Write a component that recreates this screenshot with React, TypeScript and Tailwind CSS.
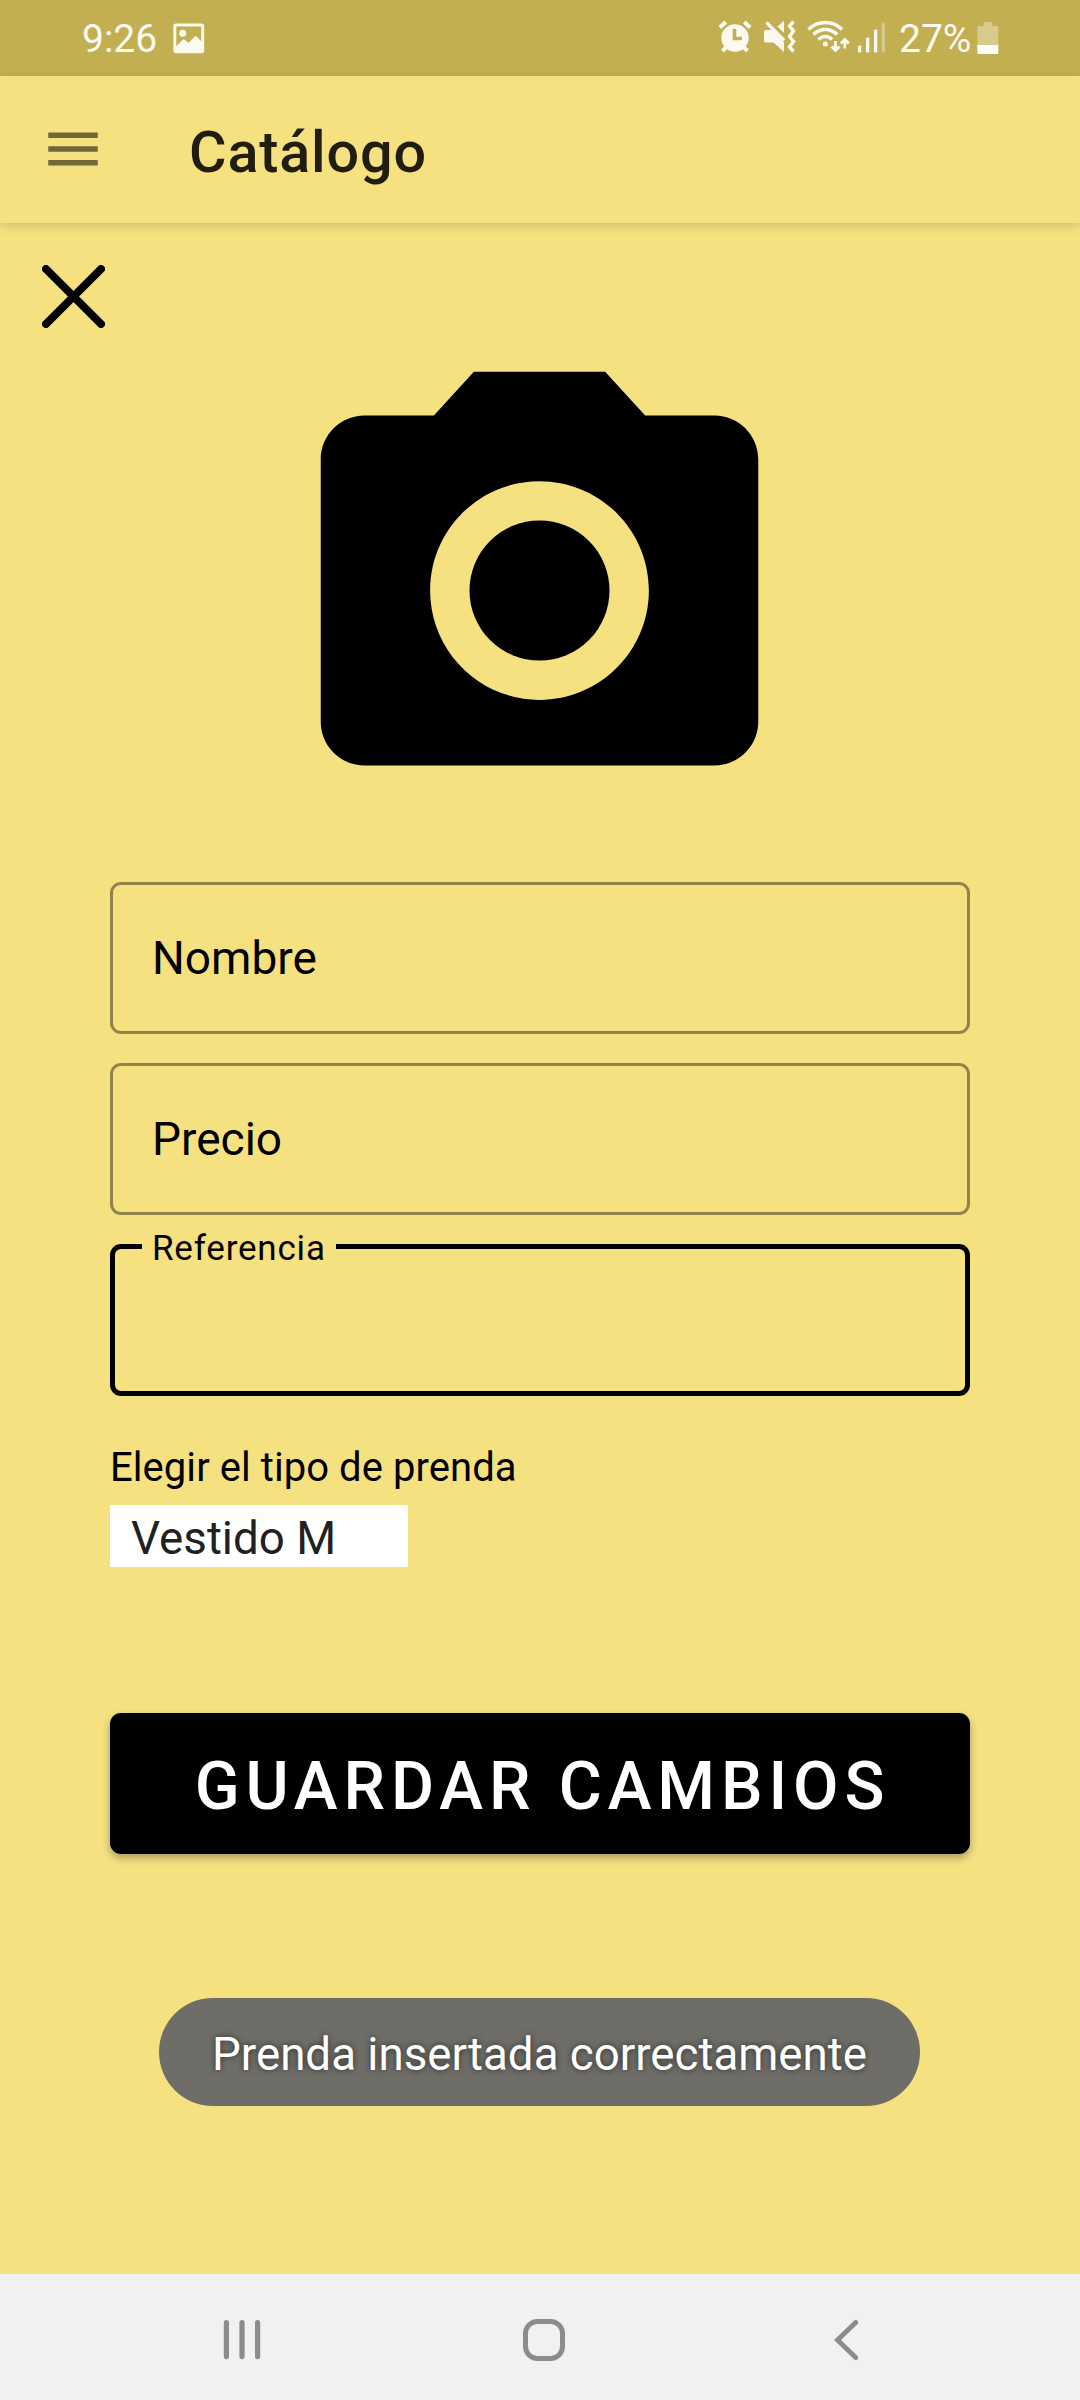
import type { ReactNode } from "react";

function ImageIcon() {
  return (
    <svg className="ml-[17px] h-[31px] w-[32px]" viewBox="0 0 32 31" fill="none">
      <path
        fill="#fcfaf0"
        fillRule="evenodd"
        d="M3 .5h25.500a2.700 2.700 0 0 1 2.700 2.700v24.300a2.700 2.700 0 0 1-2.700 2.700H3a2.700 2.700 0 0 1-2.700-2.700V3.200A2.700 2.700 0 0 1 3 .5zM3.300 3.600v19.700l6.700-6.700a1 1 0 0 1 1.400 0l4 3.400 6.500-6.700a1 1 0 0 1 1.400 0l4.900 5V3.600z"
      />
      <circle cx="9.700" cy="10.300" r="3.500" fill="#fcfaf0" />
    </svg>
  );
}

function StatusIcons() {
  return (
    <svg className="h-[40px] w-[170px]" viewBox="716 18 170 40" fill="none">
      {/* alarm clock */}
      <g>
        <circle cx="735" cy="38" r="13.700" fill="#fcfaf0" />
        <path d="M719.800 27.500l6-5.500M750.200 27.500l-6-5.500M726 47.500l-3.500 3.500M744 47.500l3.500 3.500" stroke="#fcfaf0" strokeWidth="4" />
        <path d="M734.500 29v9.500h7.500" stroke="#c2af52" strokeWidth="3.600" />
      </g>
      {/* muted speaker with vibration */}
      <g fill="#fcfaf0">
        <path d="M765.500 30h6l12.500 12.500V52l-10.500-9.500h-8a1.500 1.500 0 0 1-1.500-1.500v-9.500a1.500 1.500 0 0 1 1.500-1.500z" />
        <path d="M777.500 26.500l6.500-5.700v12.200z" />
        <path d="M766.500 22.500l17.500 18" stroke="#fcfaf0" strokeWidth="3.400" />
        <path d="M793.500 21.500l-4 4.500 4 5-4 5.500 4 5-4 5.500 4 4.500" stroke="#fcfaf0" strokeWidth="3.400" fill="none" />
      </g>
      {/* wifi with traffic arrows */}
      <g stroke="#fcfaf0" strokeWidth="3.600">
        <path d="M808.500 29.500c9.500-9.300 24-9.300 33.500 0" />
        <path d="M813.500 34.500c6.800-6.700 16.800-6.700 23.600 0" />
        <path d="M818.500 39.500c4-4 9.600-4 13.600 0" />
        <circle cx="825.400" cy="44" r="2.500" fill="#fcfaf0" stroke="none" />
        <path d="M835.500 41v9M831.500 46.500l4 4 4-4M844.800 48.500v-9M840.800 43.500l4-4 4 4" strokeWidth="2.800" />
      </g>
      {/* signal bars */}
      <g fill="#fcfaf0">
        <rect x="858" y="45.500" width="3.300" height="7" rx="1.200" />
        <rect x="866" y="37.500" width="3.300" height="15" rx="1.200" />
        <rect x="874" y="29.500" width="3.300" height="23" rx="1.200" />
        <rect x="881.700" y="22.500" width="3.300" height="30" rx="1.200" opacity=".35" />
      </g>
    </svg>
  );
}

function BatteryIcon() {
  return (
    <svg className="ml-[6px] h-[34px] w-[22px]" viewBox="0 0 22 34">
      <path d="M6.500 1h8.700v4H20a1.300 1.300 0 0 1 1.300 1.300V24H.3V6.300A1.300 1.300 0 0 1 1.600 5h4.900z" fill="#d7ca8b" />
      <path d="M.3 24h21v7.700a1.300 1.300 0 0 1-1.300 1.300H1.600A1.300 1.300 0 0 1 .3 31.700z" fill="#fff" />
    </svg>
  );
}

function Field({ children }: { children: ReactNode }) {
  return (
    <div className="flex h-[152px] items-center rounded-[11px] border-[3px] border-[#918449] pl-[39px] text-[46px] leading-[54px] text-black">
      {children}
    </div>
  );
}

export default function App() {
  return (
    <div className="flex h-[2400px] w-[1080px] flex-col overflow-hidden bg-[#f6e181] font-['Roboto',sans-serif]">
      <div className="flex h-[76px] shrink-0 items-center bg-[#c2af52] pr-[81px] pl-[82px] text-[39px] leading-[48px] text-[#fcfaf0]">
        <span className="w-[74px] pt-[2px] whitespace-nowrap">9:26</span>
        <ImageIcon />
        <div className="ml-auto flex items-center">
          <StatusIcons />
          <span className="ml-[13px] w-[72px] pt-[2px] whitespace-nowrap">27%</span>
          <BatteryIcon />
        </div>
      </div>

      <header className="flex h-[147px] shrink-0 items-center pl-[40px] shadow-[0_3px_10px_rgba(0,0,0,0.15)]">
        <svg className="-mt-[2px] h-[66px] w-[66px]" viewBox="0 0 24 24" fill="#716737">
          <path d="M3 18h18v-2H3v2zm0-5h18v-2H3v2zm0-7v2h18V6H3z" />
        </svg>
        <h1 className="ml-[83px] pt-[6px] text-[57.500px] leading-[66px] font-medium tracking-[0.850px] text-[#211e11]">Catálogo</h1>
      </header>

      <main className="flex flex-1 flex-col">
        <svg className="mt-[42px] ml-[42px] h-[63px] w-[63px] shrink-0" viewBox="0 0 63 63" fill="none" stroke="#000" strokeWidth="8" strokeLinecap="round">
          <path d="M4 4l55 55M59 4L4 59" />
        </svg>
        <svg className="ml-[277px] h-[525px] w-[525px] shrink-0" viewBox="0 0 24 24">
          <circle cx="12" cy="12" r="3.200" />
          <path d="M9 2L7.170 4H4c-1.100 0-2 .9-2 2v12c0 1.100.9 2 2 2h16c1.100 0 2-.9 2-2V6c0-1.100-.9-2-2-2h-3.170L15 2H9zm3 15c-2.760 0-5-2.240-5-5s2.240-5 5-5 5 2.240 5 5-2.240 5-5 5z" />
        </svg>

        <div className="mt-[29px] flex flex-col px-[110px]">
          <div className="flex flex-col gap-[29px]">
            <Field>Nombre</Field>
            <Field>Precio</Field>
            <div className="relative h-[152px] rounded-[11px] border-[5px] border-black">
              <span className="absolute -top-[20px] left-[27px] w-[194px] bg-[#f6e181] pl-[10px] text-[35px] leading-[40px] tracking-[0.800px] whitespace-nowrap text-black">
                Referencia
              </span>
            </div>
          </div>
          <p className="mt-[48px] text-[40px] leading-[48px] tracking-[0.060px] whitespace-nowrap text-black">Elegir el tipo de prenda</p>
          <div className="mt-[13px] flex h-[62px] w-[298px] items-center bg-white pt-[5px] pl-[21px] text-[45.700px] leading-[52px] text-[#212121]">
            Vestido M
          </div>
          <button className="mt-[146px] flex h-[141px] items-center justify-center rounded-[11px] bg-black pt-[6px] pl-[5px] text-[66px] leading-[76px] font-medium tracking-[5.900px] whitespace-nowrap text-white shadow-[0_4px_8px_rgba(0,0,0,0.3)]">
            GUARDAR CAMBIOS
          </button>
        </div>

        <div className="mt-[144px] ml-[159px] flex h-[108px] w-[761px] shrink-0 items-center justify-center rounded-[54px] bg-[#6e6d67] pt-[6px] text-[45.700px] leading-[54px] whitespace-nowrap text-white [text-shadow:0_0_6px_rgba(0,0,0,0.6)]">
          Prenda insertada correctamente
        </div>
      </main>

      <nav className="flex h-[126px] shrink-0 items-center justify-between bg-[#f1f1f1] pt-[6px] pr-[221px] pl-[223px]">
        <svg className="h-[42px] w-[38px]" viewBox="0 0 38 42" stroke="#8c8c8c" strokeWidth="5.200" strokeLinecap="round">
          <path d="M3.400 3.600v34M19 3.600v34M34.600 3.600v34" />
        </svg>
        <svg className="-ml-[8px] h-[42px] w-[42px]" viewBox="0 0 42 42" fill="none" stroke="#8c8c8c" strokeWidth="5">
          <rect x="2.500" y="2.500" width="37" height="37" rx="12" />
        </svg>
        <svg className="h-[42px] w-[25px]" viewBox="0 0 25 42" fill="none" stroke="#8c8c8c" strokeWidth="5" strokeLinecap="round">
          <path d="M21.700 3.500L3.500 21l18.200 17.500" />
        </svg>
      </nav>
    </div>
  );
}
